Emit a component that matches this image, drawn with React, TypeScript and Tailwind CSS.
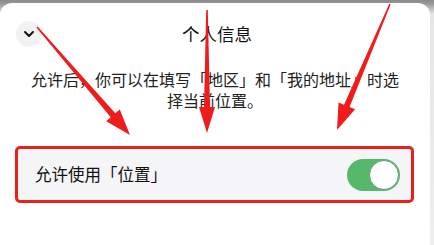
import React from "react";

export default function App() {
  return (
    <div
      className="relative w-[434px] h-[245px] overflow-hidden flex flex-col bg-[linear-gradient(to_bottom,#8a8a8a_0px,#9a9a9a_4px,#e6e6e6_14px,#eeeeee_100%)]"
      style={{ fontFamily: '"Noto Sans CJK SC", "Noto Sans", sans-serif' }}
    >
      <div className="mt-[3px] w-[430px] flex-1 bg-white rounded-t-[12px] flex flex-col">
        <div className="relative mt-[18px] h-[26px] flex items-center justify-center">
          <div className="absolute left-[16px] top-0 w-[26px] h-[26px] rounded-full bg-[#f2f2f2] flex items-center justify-center">
            <svg width="12" height="8" viewBox="0 0 12 8">
              <path d="M2 2 L6 6 L10 2" fill="none" stroke="#111" strokeWidth="2" strokeLinecap="round" strokeLinejoin="round" />
            </svg>
          </div>
          <span className="text-[17.5px] text-[#111] leading-[26px] ml-[4px]">个人信息</span>
        </div>
        <p className="mt-[22px] w-[376px] mx-auto text-center text-[16px] leading-[21px] text-[#222]">
          允许后，你可以在填写「地区」和「我的地址」时选择当前位置。
        </p>
        <div className="mt-[35px] ml-[15px] w-[399px] h-[57px] border-[3px] border-[#e8221a] rounded-[5px] bg-[#f5f5f7] flex items-center justify-between pl-[17px] pr-[11px]">
          <span className="text-[16.5px] text-[#111]">允许使用「位置」</span>
          <div className="w-[53px] h-[32px] rounded-full bg-[#56b86b] flex items-center justify-end pr-[1px]">
            <div className="w-[30px] h-[30px] rounded-full bg-white border border-[#6a9a78]" />
          </div>
        </div>
      </div>
      <svg className="absolute left-0 top-0" width="434" height="245" viewBox="0 0 434 245">
        <polygon
          fill="#ee1c1c"
          points="37.6,26.5 115.3,113.3 119.8,109.4 130,135 106.2,121.2 110.7,117.3 36.4,27.5"
        />
        <polygon
          fill="#ee1c1c"
          points="207.8,10 210,107 215,107 207,133 199,107 204,107 206.2,10"
        />
        <polygon
          fill="#ee1c1c"
          points="390.7,4.3 349.6,107.0 355.1,109.3 337,130 338.5,102.5 344.0,104.8 389.3,3.7"
        />
      </svg>
    </div>
  );
}
